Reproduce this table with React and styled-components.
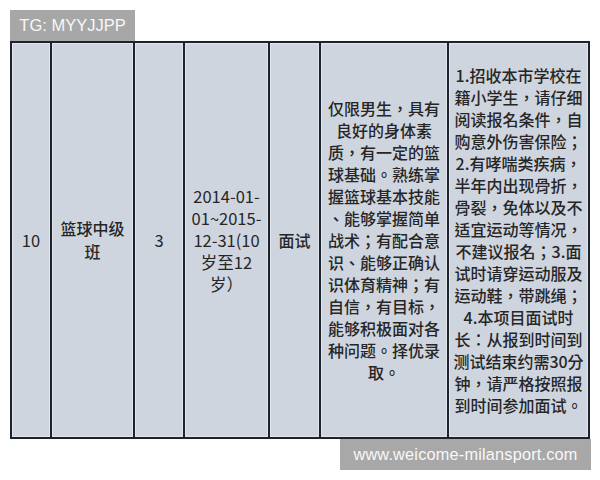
import React from "react";
import styled, { createGlobalStyle } from "styled-components";

const Global = createGlobalStyle`
  html, body { margin: 0; padding: 0; background: #ffffff; }
  body { width: 600px; height: 480px; overflow: hidden; }
`;

const Page = styled.div`
  display: flex;
  flex-direction: column;
  align-items: flex-start;
  padding: 10px 10px 0 10px;
  width: 580px;
`;

const Badge = styled.div`
  background: #a7a7a7;
  color: #f7f7f7;
  font-family: "Liberation Sans", Arial, sans-serif;
  font-size: 16.5px;
  height: 31px;
  width: 125px;
  display: flex;
  align-items: center;
  justify-content: center;
  box-sizing: border-box;
`;

const Table = styled.div`
  display: grid;
  grid-template-columns: 38px 81px 48px 83px 49px 126px 139px;
  grid-template-rows: 394px;
  gap: 2px;
  padding: 2px;
  background: #1d232c;
  width: 580px;
  box-sizing: border-box;
`;

const Cell = styled.div`
  background: #cfd5df;
  box-shadow: inset 1px 1px 0 #e2e6ec, inset -1px -1px 0 #e2e6ec;
  display: flex;
  flex-direction: column;
  align-items: center;
  justify-content: center;
  text-align: center;
  color: #262626;
  font-family: "Noto Sans CJK TC", "Noto Sans", sans-serif;
  font-weight: ${(p) => p.$weight || 500};
  font-size: ${(p) => p.$size || 16}px;
  line-height: ${(p) => p.$lh || 22}px;
  box-sizing: border-box;
`;

const Line = styled.span`
  display: block;
  white-space: nowrap;
`;

const Watermark = styled.div`
  align-self: flex-end;
  background: #a8a8a8;
  color: #f8f8f8;
  font-family: "Liberation Sans", Arial, sans-serif;
  font-size: 16.3px;
  letter-spacing: 0.2px;
  width: 251px;
  height: 31px;
  display: flex;
  align-items: center;
  justify-content: center;
  margin-right: -1px;
`;

const Lines = ({ items }) => items.map((t, i) => <Line key={i}>{t}</Line>);

const col6 = [
  "仅限男生，具有",
  "良好的身体素",
  "质，有一定的篮",
  "球基础。熟练掌",
  "握篮球基本技能",
  "、能够掌握简单",
  "战术；有配合意",
  "识、能够正确认",
  "识体育精神；有",
  "自信，有目标，",
  "能够积极面对各",
  "种问题。择优录",
  "取。",
];

const col7 = [
  "1.招收本市学校在",
  "籍小学生，请仔细",
  "阅读报名条件，自",
  "购意外伤害保险；",
  "2.有哮喘类疾病，",
  "半年内出现骨折，",
  "骨裂，免体以及不",
  "适宜运动等情况，",
  "不建议报名；3.面",
  "试时请穿运动服及",
  "运动鞋，带跳绳；",
  "4.本项目面试时",
  "长：从报到时间到",
  "测试结束约需30分",
  "钟，请严格按照报",
  "到时间参加面试。",
];

export default function App() {
  return (
    <>
      <Global />
      <Page>
        <Badge>TG: MYYJJPP</Badge>
        <Table>
          <Cell $weight={400} $size={16.5}>10</Cell>
          <Cell $lh={23}>
            <Lines items={["篮球中级", "班"]} />
          </Cell>
          <Cell $weight={400} $size={16.5}>3</Cell>
          <Cell $weight={400} $size={16.5}>
            <Lines items={["2014-01-", "01~2015-", "12-31(10", "岁至12", "岁）"]} />
          </Cell>
          <Cell>面试</Cell>
          <Cell>
            <Lines items={col6} />
          </Cell>
          <Cell>
            <Lines items={col7} />
          </Cell>
        </Table>
        <Watermark>www.weicome-milansport.com</Watermark>
      </Page>
    </>
  );
}
